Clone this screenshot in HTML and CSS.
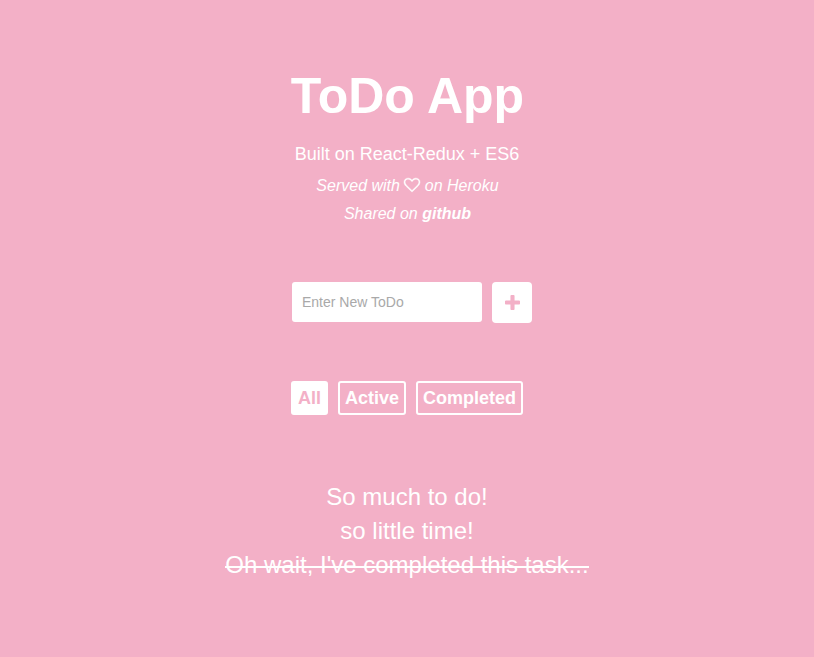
FILE: index.html
```html
<!DOCTYPE html>
<html lang="en">
<head>
<meta charset="utf-8">
<title>ToDo App</title>
<link rel="stylesheet" href="styles.css">
</head>
<body>
<main class="app">
  <header class="header">
    <h1 class="title">ToDo App</h1>
    <p class="subtitle">Built on React-Redux + ES6</p>
    <p class="note">Served with <svg class="heart" viewBox="0 0 1792 1792"><path fill="currentColor" stroke="currentColor" stroke-width="50" d="M1664 596q0-81-21.500-143t-55-98.500-81.500-59.500-94-31-98-8-112 25.500-110.500 64-86.500 72-60 61.500q-18 22-49 22t-49-22q-24-28-60-61.500t-86.500-72-110.500-64-112-25.500-98 8-94 31-81.500 59.500-55 98.500-21.500 143q0 168 187 355l581 560 580-559q188-188 188-356zm128 0q0 221-229 450l-623 600q-18 18-44 18t-44-18l-624-602q-10-8-27.500-26t-55.500-65.500-68-97.500-53.500-121-23.500-138q0-220 127-344t351-124q62 0 126.500 21.500t120 58 95.500 68.500 76 68q36-36 76-68t95.500-68.500 120-58 126.500-21.500q224 0 351 124t127 344z"/></svg> on Heroku</p>
    <p class="note">Shared on <a class="link" href="#">github</a></p>
  </header>
  <form class="add">
    <input class="field" type="text" placeholder="Enter New ToDo">
    <button class="submit" type="button" aria-label="Add"><svg class="plus" viewBox="0 0 1408 1408"><path fill="currentColor" d="M1408 608v192q0 40-28 68t-68 28H896v416q0 40-28 68t-68 28H608q-40 0-68-28t-28-68V896H96q-40 0-68-28T0 800V608q0-40 28-68t68-28h416V96q0-40 28-68t68-28h192q40 0 68 28t28 68v416h416q40 0 68 28t28 68z"/></svg></button>
  </form>
  <nav class="filters">
    <button class="filter active">All</button>
    <button class="filter">Active</button>
    <button class="filter">Completed</button>
  </nav>
  <ul class="todos">
    <li>So much to do!</li>
    <li>so little time!</li>
    <li class="done">Oh wait, I've completed this task...</li>
  </ul>
</main>
</body>
</html>
```
FILE: styles.css
```css
* { box-sizing: border-box; }
body {
  margin: 0;
  background: #f3b0c7;
  color: #fff;
  font-family: "Liberation Sans", Arial, sans-serif;
}
.app {
  display: flex;
  flex-direction: column;
  align-items: center;
  padding-top: 67px;
}
.header { text-align: center; }
.title { margin: 0 0 17px; padding-left: 1px; font-size: 50px; line-height: 58px; }
.subtitle { margin: 0 0 8px; font-size: 18px; line-height: 24px; }
.note { margin: 0 0 4px; padding-left: 1px; font-size: 16px; line-height: 24px; font-style: italic; }
.heart { width: 16px; height: 16px; vertical-align: -2px; overflow: visible; }
.link { color: inherit; font-weight: bold; text-decoration: none; }
.add { display: flex; gap: 10px; margin: 52px 0 0 10px; }
.field {
  width: 190px;
  height: 40px;
  padding: 0 10px;
  border: 0;
  border-radius: 3px;
  background: #fff;
  font: 14px "Liberation Sans", Arial, sans-serif;
}
.field::placeholder { color: #a9a9a9; }
.submit {
  display: flex;
  align-items: center;
  justify-content: center;
  width: 40px;
  height: 41px;
  padding: 0;
  border: 0;
  border-radius: 4px;
  background: #fff;
  color: #f3b0c7;
}
.plus { width: 15px; height: 15px; }
.filters { display: flex; gap: 10px; margin-top: 58px; }
.filter {
  height: 34px;
  padding: 0 5px;
  border: 2px solid #fff;
  border-radius: 3px;
  background: transparent;
  color: #fff;
  font: bold 18px "Liberation Sans", Arial, sans-serif;
}
.filter.active { background: #fff; color: #f3b0c7; }
.todos {
  margin: 65px 0 0;
  padding: 0;
  list-style: none;
  text-align: center;
  font-size: 24px;
  line-height: 34px;
}
.done { background: linear-gradient(#fff, #fff) 0 18px / 100% 2px no-repeat; }
```
